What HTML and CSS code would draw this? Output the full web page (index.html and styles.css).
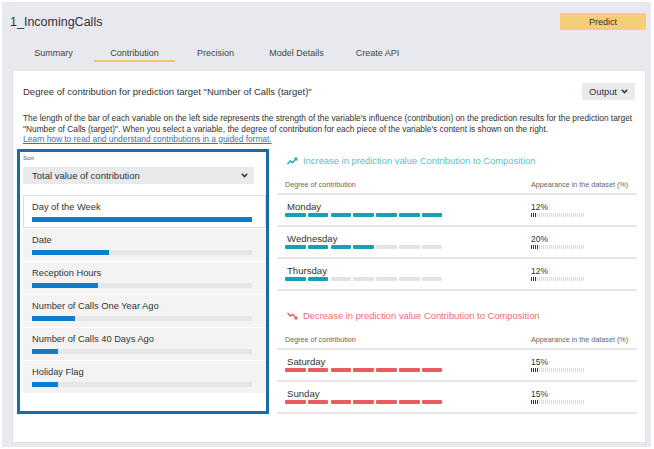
FILE: index.html
```html
<!DOCTYPE html>
<html lang="en">
<head>
<meta charset="utf-8">
<title>1_IncomingCalls</title>
<link rel="stylesheet" href="styles.css">
</head>
<body>
<div class="app">
  <header class="top">
    <h1 class="title">1_IncomingCalls</h1>
    <button class="predict">Predict</button>
  </header>
  <nav class="tabs">
    <a class="tab">Summary</a>
    <a class="tab active">Contribution</a>
    <a class="tab">Precision</a>
    <a class="tab">Model Details</a>
    <a class="tab">Create API</a>
  </nav>
  <main class="panel">
    <div class="panel-head">
      <h2 class="panel-title">Degree of contribution for prediction target "Number of Calls (target)"</h2>
      <button class="output">Output <svg class="chev" width="7" height="5" viewBox="0 0 7 5"><path d="M0.8 0.8 L3.5 3.6 L6.2 0.8" fill="none" stroke="#333" stroke-width="1.5"/></svg></button>
    </div>
    <p class="desc">
      <span class="line">The length of the bar of each variable on the left side represents the strength of the variable's influence (contribution) on the prediction results for the prediction target</span>
      <span class="line">"Number of Calls (target)". When you select a variable, the degree of contribution for each piece of the variable's content is shown on the right.</span>
      <a class="line link">Learn how to read and understand contributions in a guided format.</a>
    </p>
    <div class="content">
      <aside class="vars">
        <div class="sort-label">Sort</div>
        <div class="select"><span>Total value of contribution</span><svg class="chev" width="7" height="5" viewBox="0 0 7 5"><path d="M0.8 0.8 L3.5 3.6 L6.2 0.8" fill="none" stroke="#333" stroke-width="1.5"/></svg></div>
        <ul class="var-list">
          <li class="var active"><div class="var-name">Day of the Week</div><div class="track"><div class="fill" style="width:100%"></div></div></li>
          <li class="var"><div class="var-name">Date</div><div class="track"><div class="fill" style="width:77px"></div></div></li>
          <li class="var"><div class="var-name">Reception Hours</div><div class="track"><div class="fill" style="width:66px"></div></div></li>
          <li class="var"><div class="var-name">Number of Calls One Year Ago</div><div class="track"><div class="fill" style="width:43px"></div></div></li>
          <li class="var"><div class="var-name">Number of Calls 40 Days Ago</div><div class="track"><div class="fill" style="width:26px"></div></div></li>
          <li class="var"><div class="var-name">Holiday Flag</div><div class="track"><div class="fill" style="width:25.5px"></div></div></li>
        </ul>
      </aside>
      <section class="detail">
        <h3 class="sec-title inc"><svg width="11" height="8" viewBox="0 0 11 8"><path d="M0.5 7 L3.5 4 L5.5 5.6 L9.6 1.4" fill="none" stroke="#1ea5b5" stroke-width="1.4"/><path d="M6.6 0.8 L10.4 0.6 L10.2 4.2 Z" fill="#1ea5b5"/></svg>Increase in prediction value Contribution to Composition</h3>
        <div class="thead"><span class="c1">Degree of contribution</span><span class="c2">Appearance in the dataset (%)</span></div>
        <div class="row">
          <div class="c1"><div class="lbl">Monday</div><div class="segs"><span class="seg up"></span><span class="seg up"></span><span class="seg up"></span><span class="seg up"></span><span class="seg up"></span><span class="seg up"></span><span class="seg up"></span></div></div>
          <div class="c2"><div class="pct">12%</div><div class="ticks"><div class="ticks-fill" style="width:6px"></div></div></div>
        </div>
        <div class="row">
          <div class="c1"><div class="lbl">Wednesday</div><div class="segs"><span class="seg up"></span><span class="seg up"></span><span class="seg up"></span><span class="seg up"></span><span class="seg"></span><span class="seg"></span><span class="seg"></span></div></div>
          <div class="c2"><div class="pct">20%</div><div class="ticks"><div class="ticks-fill" style="width:8px"></div></div></div>
        </div>
        <div class="row">
          <div class="c1"><div class="lbl">Thursday</div><div class="segs"><span class="seg up"></span><span class="seg up"></span><span class="seg"></span><span class="seg"></span><span class="seg"></span><span class="seg"></span><span class="seg"></span></div></div>
          <div class="c2"><div class="pct">12%</div><div class="ticks"><div class="ticks-fill" style="width:6px"></div></div></div>
        </div>

        <h3 class="sec-title dec"><svg width="11" height="8" viewBox="0 0 11 8"><path d="M0.5 1 L3.5 4 L5.5 2.4 L9.6 6.6" fill="none" stroke="#e9575b" stroke-width="1.4"/><path d="M6.6 7.2 L10.4 7.4 L10.2 3.8 Z" fill="#e9575b"/></svg>Decrease in prediction value Contribution to Composition</h3>
        <div class="thead"><span class="c1">Degree of contribution</span><span class="c2">Appearance in the dataset (%)</span></div>
        <div class="row">
          <div class="c1"><div class="lbl">Saturday</div><div class="segs"><span class="seg down"></span><span class="seg down"></span><span class="seg down"></span><span class="seg down"></span><span class="seg down"></span><span class="seg down"></span><span class="seg down"></span></div></div>
          <div class="c2"><div class="pct">15%</div><div class="ticks"><div class="ticks-fill" style="width:8px"></div></div></div>
        </div>
        <div class="row">
          <div class="c1"><div class="lbl">Sunday</div><div class="segs"><span class="seg down"></span><span class="seg down"></span><span class="seg down"></span><span class="seg down"></span><span class="seg down"></span><span class="seg down"></span><span class="seg down"></span></div></div>
          <div class="c2"><div class="pct">15%</div><div class="ticks"><div class="ticks-fill" style="width:8px"></div></div></div>
        </div>
      </section>
    </div>
  </main>
</div>
</body>
</html>
```
FILE: styles.css
```css
* { box-sizing: border-box; }
body {
  margin: 0;
  background: #fff;
  font-family: "Liberation Sans", Arial, sans-serif;
  color: #333;
}
.app {
  margin: 2px 3px 2px 2px;
  height: 445px;
  background: #e7e9ee;
  padding: 11px 5px 0 8px;
}
.top {
  display: flex;
  justify-content: space-between;
  align-items: center;
  height: 17px;
}
.title {
  margin: 0;
  font-size: 12.5px;
  font-weight: normal;
  line-height: 17px;
  color: #333;
  position: relative;
  top: 1px;
}
.predict {
  width: 86px;
  height: 17px;
  padding: 0;
  border: 0;
  background: #f4cf77;
  font-family: inherit;
  font-size: 9px;
  color: #333;
}
.tabs {
  display: flex;
  margin: 16px 0 0 3px;
}
.tab {
  width: 81px;
  height: 16px;
  text-align: center;
  font-size: 9px;
  line-height: 14px;
  color: #444;
  border-bottom: 2px solid transparent;
}
.tab.active { border-bottom-color: #f2c462; }
.panel {
  display: block;
  margin: 8px 0 0 2px;
  height: 373px;
  background: #fff;
  border: 1px solid #dfe2e7;
  padding: 12px 10px 0 10px;
}
.panel-head {
  display: flex;
  justify-content: space-between;
  align-items: center;
  height: 17px;
}
.panel-title {
  margin: 0;
  font-size: 9.5px;
  font-weight: normal;
  color: #333;
}
.output {
  width: 53px;
  height: 17px;
  padding: 0;
  border: 0;
  background: #e8eaee;
  font-family: inherit;
  font-size: 9.3px;
  color: #333;
  display: flex;
  align-items: center;
  justify-content: center;
  gap: 4px;
}
.desc {
  margin: 13px 0 0;
  font-size: 8.35px;
  line-height: 10.5px;
  color: #333;
}
.desc .line { display: block; white-space: nowrap; }
.desc .link { color: #2b78c2; text-decoration: underline; }
.content {
  display: flex;
  margin-top: 4.5px;
}
.vars {
  flex: none;
  width: 252px;
  margin-left: -6px;
  border: 3px solid #1b6aa1;
  padding: 2px 0 5px 3px;
}
.sort-label {
  font-size: 6px;
  line-height: 8px;
  color: #555;
}
.select {
  margin-top: 5px;
  width: 231px;
  height: 17px;
  background: #e9eaed;
  display: flex;
  align-items: center;
  justify-content: space-between;
  padding: 0 6px 0 9px;
  font-size: 9.5px;
  color: #333;
}
.var-list {
  list-style: none;
  margin: 11px 0 0;
  padding: 0;
}
.var {
  height: 33px;
  background: #f3f3f3;
  border-top: 1px solid #fff;
  padding: 5px 14px 0 9px;
}
.var.active {
  background: #fff;
  border: 1px solid #dcdcdc;
  padding: 5px 13px 0 8px;
}
.var-name {
  font-size: 9.3px;
  line-height: 12px;
  color: #333;
}
.track {
  margin-top: 4px;
  height: 5px;
  background: #e6e6e6;
}
.fill {
  height: 100%;
  background: #0b7dcc;
}
.detail {
  flex: none;
  width: 360px;
  margin-left: 8px;
}
.sec-title {
  margin: 5px 0 0;
  padding-left: 10px;
  font-size: 9.4px;
  line-height: 14px;
  font-weight: normal;
  display: flex;
  align-items: center;
  gap: 5px;
}
.sec-title.inc { color: #5bbfcb; }
.sec-title.dec { color: #f06e70; margin-top: 18px; }
.thead {
  margin-top: 10px;
  height: 17px;
  display: flex;
  padding-left: 8px;
  border-bottom: 2px solid #e6e6e6;
  font-size: 7.2px;
  line-height: 14px;
  color: #666;
  white-space: nowrap;
}
.c1 { width: 246px; flex: none; }
.row {
  height: 32px;
  display: flex;
  padding: 6px 0 0 8px;
  border-bottom: 2px solid #e6e6e6;
}
.lbl {
  padding-left: 2px;
  font-size: 9.6px;
  line-height: 12px;
  color: #333;
}
.segs {
  display: flex;
  gap: 2.1px;
}
.seg {
  width: 20.7px;
  height: 4px;
  border-radius: 1px;
  background: #e3e3e3;
}
.seg.up { background: #12a3b3; }
.seg.down { background: #ea5c5e; }
.pct {
  font-size: 8.5px;
  line-height: 12px;
  color: #333;
}
.ticks {
  width: 54px;
  height: 4px;
  background: repeating-linear-gradient(90deg, #dadada 0 1px, transparent 1px 2px);
}
.ticks-fill {
  height: 100%;
  background: repeating-linear-gradient(90deg, #2e3a50 0 1.3px, #fff 1.3px 2px);
}
```
